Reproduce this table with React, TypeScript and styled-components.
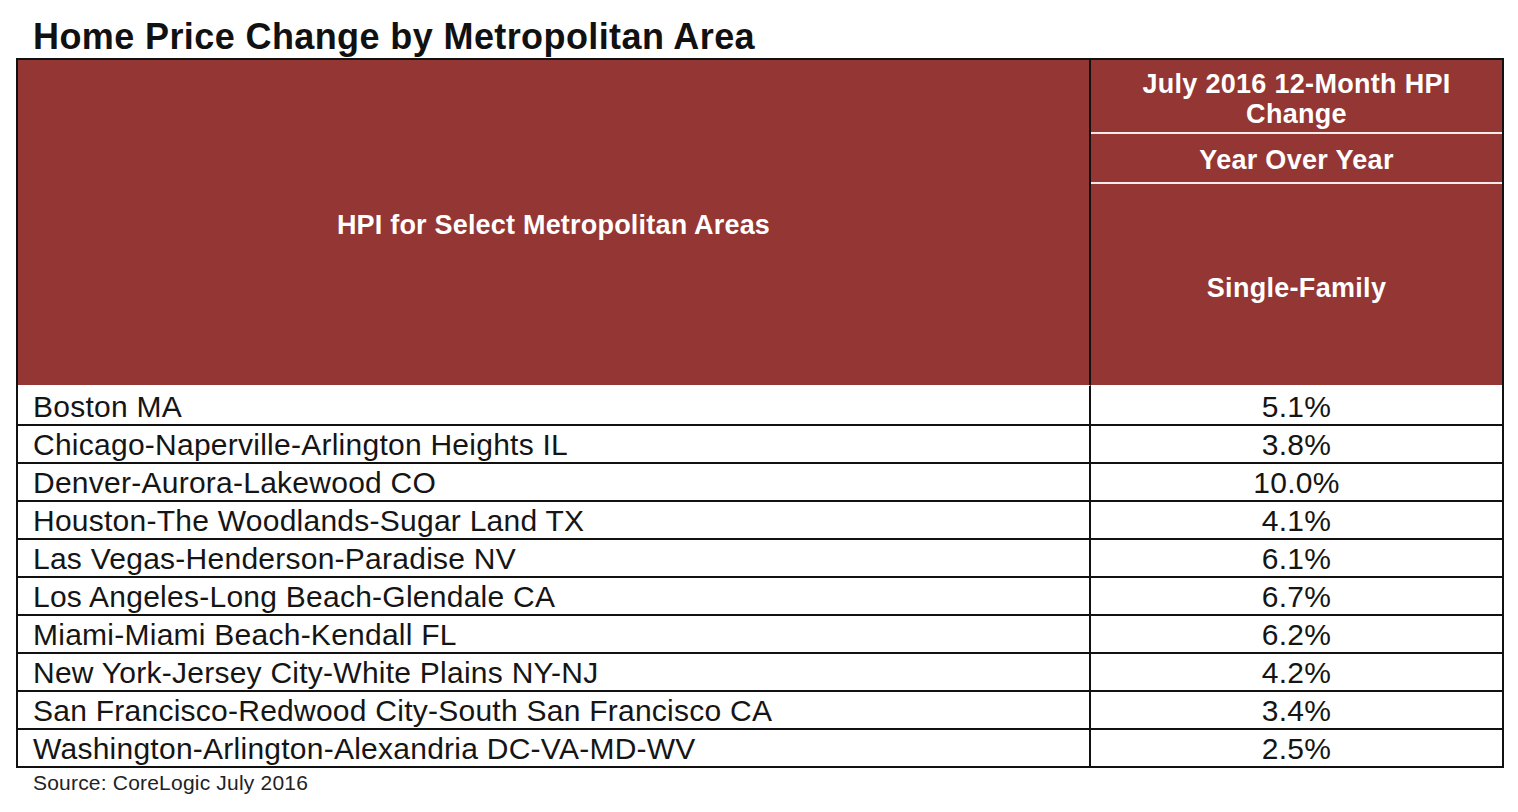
import React from "react";
import styled, { createGlobalStyle } from "styled-components";

const Global = createGlobalStyle`
  html, body { margin: 0; padding: 0; background: #ffffff; }
  body { font-family: "Liberation Sans", Arial, sans-serif; color: #111; }
`;

const Page = styled.div`
  width: 1518px;
  height: 812px;
  box-sizing: border-box;
  padding: 16px 14px 0 16px;
`;

const Title = styled.h1`
  margin: 0 0 0 17px;
  font-size: 36px;
  letter-spacing: 0.4px;
  line-height: 42px;
  font-weight: 700;
  color: #111;
  white-space: nowrap;
`;

const Table = styled.div`
  display: grid;
  grid-template-columns: 1073px 1fr;
  border: 2px solid #111;
  width: 1488px;
  box-sizing: border-box;
`;

const HeadLeft = styled.div`
  background: #943634;
  height: 325px;
  display: flex;
  align-items: center;
  justify-content: center;
  color: #fff;
  font-weight: 700;
  font-size: 27px;
  letter-spacing: 0.2px;
  padding-top: 6px;
  box-sizing: border-box;
  border-right: 2px solid #111;
  white-space: nowrap;
`;

const HeadRight = styled.div`
  display: grid;
  grid-template-rows: 74px 50px 1fr;
  background: #943634;
  height: 325px;
`;

const HeadCell = styled.div<{ $line?: boolean; $pad: number }>`
  display: flex;
  align-items: center;
  justify-content: center;
  text-align: center;
  color: #fff;
  font-weight: 700;
  font-size: 27px;
  letter-spacing: 0.3px;
  line-height: 30px;
  border-bottom: ${(p) => (p.$line ? "2px solid #f4eaea" : "none")};
  padding-top: ${(p) => p.$pad}px;
  white-space: nowrap;
`;

const Cell = styled.div<{ $center?: boolean; $first?: boolean }>`
  height: ${(p) => (p.$first ? "35px" : "34px")};
  border-top: ${(p) => (p.$first ? "1px solid #fff" : "2px solid #111")};
  display: flex;
  align-items: center;
  justify-content: ${(p) => (p.$center ? "center" : "flex-start")};
  padding-left: ${(p) => (p.$center ? "0" : "15px")};
  padding-top: ${(p) => (p.$first ? "3px" : "2px")};
  box-sizing: content-box;
  font-size: 30px;
  letter-spacing: 0.25px;
  color: #151515;
  background: #fff;
  border-right: ${(p) => (p.$center ? "none" : "2px solid #111")};
  white-space: nowrap;
`;

const Source = styled.div`
  margin: 2px 0 0 17px;
  font-size: 21px;
  letter-spacing: 0.2px;
  line-height: 26px;
  color: #222;
`;

const rows: [string, string][] = [
  ["Boston MA", "5.1%"],
  ["Chicago-Naperville-Arlington Heights IL", "3.8%"],
  ["Denver-Aurora-Lakewood CO", "10.0%"],
  ["Houston-The Woodlands-Sugar Land TX", "4.1%"],
  ["Las Vegas-Henderson-Paradise NV", "6.1%"],
  ["Los Angeles-Long Beach-Glendale CA", "6.7%"],
  ["Miami-Miami Beach-Kendall FL", "6.2%"],
  ["New York-Jersey City-White Plains NY-NJ", "4.2%"],
  ["San Francisco-Redwood City-South San Francisco CA", "3.4%"],
  ["Washington-Arlington-Alexandria DC-VA-MD-WV", "2.5%"],
];

export default function App() {
  return (
    <Page>
      <Global />
      <Title>Home Price Change by Metropolitan Area</Title>
      <Table>
        <HeadLeft>HPI for Select Metropolitan Areas</HeadLeft>
        <HeadRight>
          <HeadCell $line $pad={6}>
            July 2016 12-Month HPI
            <br />
            Change
          </HeadCell>
          <HeadCell $line $pad={4}>
            Year Over Year
          </HeadCell>
          <HeadCell $pad={6}>Single-Family</HeadCell>
        </HeadRight>
        {rows.map(([name, val], i) => (
          <React.Fragment key={name}>
            <Cell $first={i === 0}>{name}</Cell>
            <Cell $first={i === 0} $center>
              {val}
            </Cell>
          </React.Fragment>
        ))}
      </Table>
      <Source>Source: CoreLogic July 2016</Source>
    </Page>
  );
}
